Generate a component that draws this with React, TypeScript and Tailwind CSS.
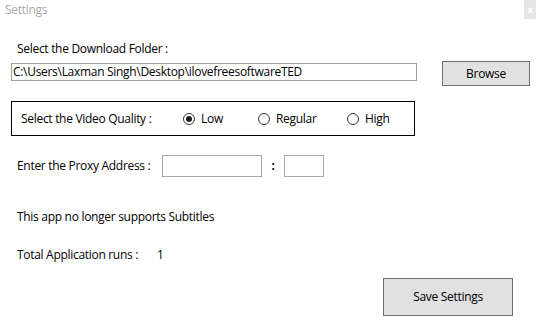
import React from 'react';

function Radio({ label, checked, w }: { label: string; checked?: boolean; w: string }) {
  return (
    <div className={`flex items-center gap-[6px] ${w}`}>
      <span className="flex h-[12px] w-[12px] items-center justify-center rounded-full border border-[#333333] bg-white">
        {checked && <span className="h-[6px] w-[6px] rounded-full bg-[#1a1a1a]" />}
      </span>
      <span>{label}</span>
    </div>
  );
}

export default function App() {
  return (
    <div className="relative h-[325px] w-[536px] overflow-hidden bg-white text-[12px] leading-[16px] tracking-[-0.3px] text-black [font-family:'Open_Sans',sans-serif]">
      {/* title bar */}
      <div className="flex h-[19px] items-start justify-between">
        <span className="pl-[5px] pt-[2px] text-[#a8a8a8]">Settings</span>
        <span className="flex h-[19px] w-[12px] items-center justify-center bg-[#e6e6e6] text-[9px] font-bold text-white">x</span>
      </div>

      <div className="flex flex-col pl-[11px]">
        <div className="mt-[22px] pl-[6px]">Select the Download Folder :</div>

        <div className="mt-[4px] flex items-start">
          <div className="mt-[2px] flex h-[18px] w-[406px] items-center border border-[#a0a0a0] pl-[1px]">
            C:\Users\Laxman Singh\Desktop\ilovefreesoftwareTED
          </div>
          <button className="ml-[25px] h-[25px] w-[88px] border border-[#6f6f6f] bg-[#e1e1e1]">Browse</button>
        </div>

        <div className="mt-[15px] flex h-[35px] w-[404px] items-center border border-black pl-[9px]">
          <span className="w-[162px]">Select the Video Quality :</span>
          <Radio label="Low" checked w="w-[75px]" />
          <Radio label="Regular" w="w-[89px]" />
          <Radio label="High" w="w-[60px]" />
        </div>

        <div className="mt-[19px] flex h-[22px] items-center">
          <span className="w-[151px] pl-[6px]">Enter the Proxy Address :</span>
          <div className="h-[22px] w-[100px] border border-[#a8a8a8]" />
          <span className="w-[22px] text-center font-bold">:</span>
          <div className="h-[22px] w-[40px] border border-[#a8a8a8]" />
        </div>

        <div className="mt-[32px] pl-[6px]">This app no longer supports Subtitles</div>

        <div className="mt-[22px] flex pl-[6px]">
          <span className="w-[140px]">Total Application runs :</span>
          <span>1</span>
        </div>

        <button className="ml-[372px] mt-[15px] h-[38px] w-[130px] border border-[#6f6f6f] bg-[#e1e1e1]">Save Settings</button>
      </div>
    </div>
  );
}
